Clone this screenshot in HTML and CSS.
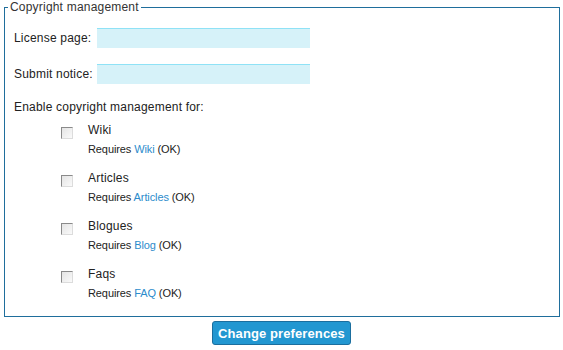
FILE: index.html
```html
<!DOCTYPE html>
<html lang="en">
<head>
    <meta charset="UTF-8">
    <title>Copyright management</title>
    <link rel="stylesheet" href="styles.css">
</head>
<body>
    <form class="prefs">
        <fieldset class="box">
            <legend>Copyright management</legend>
            <div class="inner">
                <div class="field">
                    <label for="license">License page:</label>
                    <input type="text" id="license" class="text-input">
                </div>
                <div class="field">
                    <label for="notice">Submit notice:</label>
                    <input type="text" id="notice" class="text-input">
                </div>

                <div class="enable-title">Enable copyright management for:</div>

                <div class="features">
                    <div class="feature">
                        <input type="checkbox" class="check" id="f-wiki">
                        <div class="feature-text">
                            <label for="f-wiki" class="feature-name">Wiki</label>
                            <div class="requires">Requires <a href="#">Wiki</a> (OK)</div>
                        </div>
                    </div>
                    <div class="feature">
                        <input type="checkbox" class="check" id="f-articles">
                        <div class="feature-text">
                            <label for="f-articles" class="feature-name">Articles</label>
                            <div class="requires">Requires <a href="#">Articles</a> (OK)</div>
                        </div>
                    </div>
                    <div class="feature">
                        <input type="checkbox" class="check" id="f-blogs">
                        <div class="feature-text">
                            <label for="f-blogs" class="feature-name">Blogues</label>
                            <div class="requires">Requires <a href="#">Blog</a> (OK)</div>
                        </div>
                    </div>
                    <div class="feature">
                        <input type="checkbox" class="check" id="f-faqs">
                        <div class="feature-text">
                            <label for="f-faqs" class="feature-name">Faqs</label>
                            <div class="requires">Requires <a href="#">FAQ</a> (OK)</div>
                        </div>
                    </div>
                </div>
            </div>
        </fieldset>

        <div class="actions">
            <button type="submit" class="submit-btn">Change preferences</button>
        </div>
    </form>
</body>
</html>
```

FILE: styles.css
```css
body {
    margin: 0;
    font-family: 'Liberation Sans', Arial, sans-serif;
    font-size: 12px;
    letter-spacing: 0.2px;
    color: #222;
    background: #fff;
}

.box {
    margin: 0 3px 0 4px;
    padding: 14px 0 16px 3px;
    border: 1px solid #1f6e9c;
    min-width: 0;
}

.box legend {
    padding: 0 2px;
    font-size: 12px;
    line-height: 14px;
    color: #333;
}

.inner {
    padding-left: 6px;
}

.field {
    display: flex;
    align-items: center;
    margin-bottom: 16px;
}

.field label {
    width: 83px;
    line-height: 14px;
}

.text-input {
    width: 213px;
    height: 20px;
    box-sizing: border-box;
    margin: 0;
    padding: 2px 4px;
    border: none;
    border-top: 1px solid #8fe2f6;
    background: #d6f2f9;
    font-family: inherit;
    font-size: 12px;
}

.enable-title {
    line-height: 14px;
    margin-bottom: 9px;
}

.features {
    padding-left: 47px;
}

.feature {
    display: flex;
    align-items: flex-start;
    margin-bottom: 15px;
}

.feature:last-child {
    margin-bottom: 0;
}

.check {
    appearance: none;
    width: 12px;
    height: 12px;
    margin: 4px 15px 0 0;
    box-sizing: border-box;
    border: 1px solid #8a8a8a;
    border-right-color: #dcdcdc;
    border-bottom-color: #dcdcdc;
    background: linear-gradient(135deg, #e4e4e4, #fafafa);
}

.feature-name {
    display: block;
    line-height: 14px;
    margin-bottom: 6px;
}

.requires {
    font-size: 11px;
    line-height: 13px;
    letter-spacing: -0.1px;
}

.requires a {
    color: #2c8ccc;
    text-decoration: none;
}

.actions {
    text-align: center;
    margin-top: 4px;
}

.submit-btn {
    height: 24px;
    padding: 0 5px;
    border: 1px solid #1b6e9e;
    border-radius: 3px;
    background: #2297d1;
    color: #fff;
    font-family: inherit;
    font-size: 13px;
    font-weight: bold;
    letter-spacing: 0.1px;
    cursor: pointer;
}
```
